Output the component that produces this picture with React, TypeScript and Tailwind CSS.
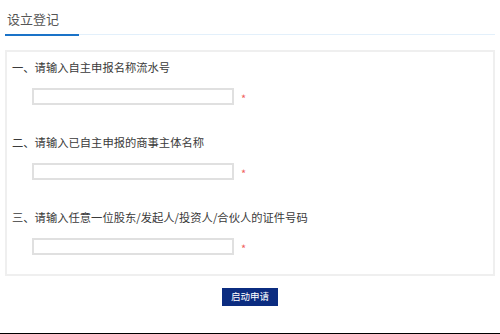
import React from 'react';

const font = { fontFamily: '"Noto Sans CJK SC", "Noto Sans", sans-serif' };

const fields = [
    { label: '一、请输入自主申报名称流水号' },
    { label: '二、请输入已自主申报的商事主体名称' },
    { label: '三、请输入任意一位股东/发起人/投资人/合伙人的证件号码' },
];

export default function App() {
    return (
        <div className="w-[500px] h-[334px] bg-white border-b border-black flex flex-col" style={font}>
            {/* Tab header */}
            <div className="h-[34px] pl-[7px] flex items-center">
                <span className="text-[13px] text-[#555] leading-none pt-[2px]">设立登记</span>
            </div>
            <div className="flex items-start mx-[5px]">
                <div className="w-[74px] h-[2px] bg-[#1a73c8]" />
                <div className="flex-1 h-px bg-[#e3f0fb]" />
            </div>

            {/* Form panel */}
            <div className="mx-[5px] mt-[14px] h-[226px] border-2 border-[#efefef] pl-[5px] pt-[7px]">
                {fields.map((f, i) => (
                    <div key={i} className={i === 0 ? '' : 'mt-[29px]'}>
                        <p className="text-[11.3px] leading-[16px] text-[#3a3a3a]">{f.label}</p>
                        <div className="flex items-center mt-[13px] ml-[20px]">
                            <input
                                type="text"
                                className="w-[202px] h-[17px] border-2 border-[#e0e0e0] bg-white outline-none"
                            />
                            <span className="ml-[7px] text-[11px] text-[#f06060] leading-none mt-[3px]">*</span>
                        </div>
                    </div>
                ))}
            </div>

            {/* Submit */}
            <div className="flex justify-center mt-[12px]">
                <button className="w-[56px] h-[18px] bg-[#0b2c80] text-white text-[9.5px] leading-none">
                    启动申请
                </button>
            </div>
        </div>
    );
}
